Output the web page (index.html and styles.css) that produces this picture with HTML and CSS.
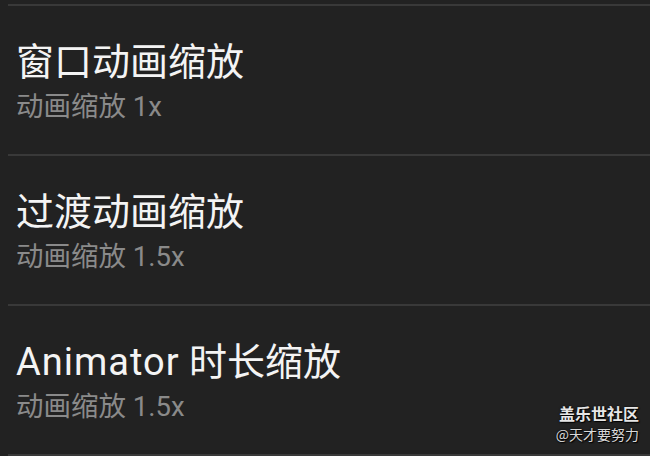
FILE: index.html
```html
<!DOCTYPE html>
<html lang="zh-CN">
<head>
<meta charset="utf-8">
<title>动画缩放</title>
<link rel="stylesheet" href="styles.css">
</head>
<body>
<div class="screen">
  <ul class="list">
    <li class="item">
      <div class="title">窗口动画缩放</div>
      <div class="summary">动画缩放 1x</div>
    </li>
    <li class="item">
      <div class="title">过渡动画缩放</div>
      <div class="summary">动画缩放 1.5x</div>
    </li>
    <li class="item">
      <div class="title"><span class="latin">Animator</span> 时长缩放</div>
      <div class="summary">动画缩放 1.5x</div>
    </li>
    <li class="item item-last"></li>
  </ul>
  <div class="watermark">
    <div class="wm-brand">盖乐世社区</div>
    <div class="wm-user">@天才要努力</div>
  </div>
</div>
</body>
</html>
```

FILE: styles.css
```css
html, body {
  margin: 0;
  padding: 0;
  background: #222222;
}
.screen {
  position: relative;
  width: 650px;
  height: 456px;
  overflow: hidden;
  background: #222222;
  font-family: Roboto, "Noto Sans CJK SC", sans-serif;
}
.list {
  list-style: none;
  margin: 4px 0 0 8px;
  padding: 0;
}
.item {
  border-top: 2px solid #393939;
  height: 148px;
  padding-left: 8px;
  box-sizing: content-box;
}
.item-last {
  height: 10px;
}
.title {
  padding-top: 34px;
  font-size: 38px;
  line-height: 44px;
  color: #f4f4f4;
  white-space: nowrap;
}
.latin {
  letter-spacing: 1px;
}
.summary {
  margin-top: 7px;
  font-size: 27.5px;
  line-height: 32px;
  color: #8a8a8a;
  white-space: nowrap;
}
.watermark {
  position: absolute;
  right: 11px;
  bottom: 12px;
  text-align: right;
  font-family: "Noto Sans CJK SC", sans-serif;
  text-shadow: 0 0 2px #000, 1px 1px 1px #000;
}
.wm-brand {
  font-size: 16px;
  line-height: 22px;
  font-weight: 700;
  color: #e6e6e6;
}
.wm-user {
  font-size: 14px;
  line-height: 20px;
  color: #d8d8d8;
}
```
